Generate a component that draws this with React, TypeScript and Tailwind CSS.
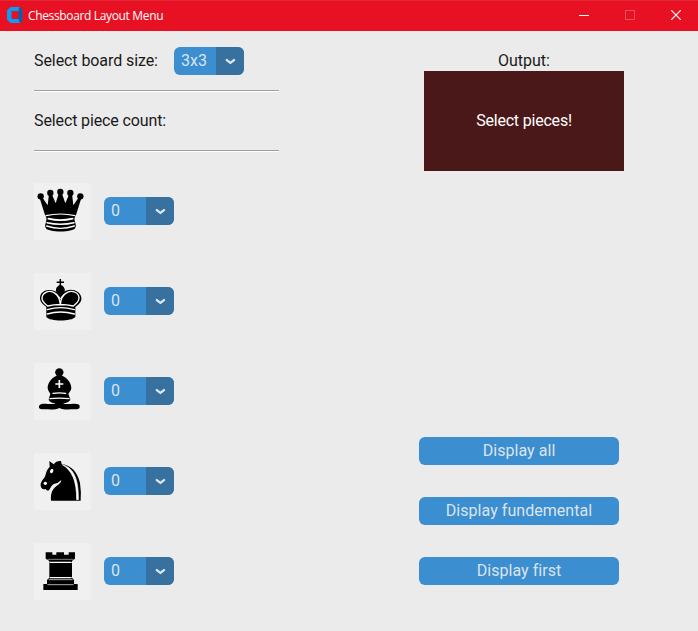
import type { ReactNode } from "react";

function Chevron() {
  return (
    <svg className="h-[28px] w-[28px]" viewBox="0 0 28 28" fill="none">
      <path d="M10.8 13.1 L14.4 15.9 L18 13.1" stroke="#dce4ee" strokeWidth="2.4" strokeLinecap="round" strokeLinejoin="round" />
    </svg>
  );
}

function Select({ value }: { value: string }) {
  return (
    <button className="flex h-[28px] w-[70px] overflow-hidden rounded-[6px] bg-[#3b8ed0] text-[#dce4ee]">
      <span className="w-[42px] pl-[7px] text-left leading-[28px]">{value}</span>
      <span className="h-[28px] w-[28px] bg-[#36719f]">
        <Chevron />
      </span>
    </button>
  );
}

function Separator() {
  return <div className="h-[2px] w-[245px] border-t border-[#a0a0a0] bg-white" />;
}

function Queen() {
  return (
    <>
      <g fill="#000">
        <circle cx="38" cy="55" r="9.5" />
        <circle cx="67" cy="45" r="9.5" />
        <circle cx="97" cy="42" r="9.5" />
        <circle cx="127" cy="45" r="9.5" />
        <circle cx="157" cy="55" r="9.5" />
        <path d="M34 57 L42 57 L59 82 L63 47 L71 47 L83 76 L93 44 L101 44 L112 76 L124 47 L132 47 L136 82 L153 57 L161 57 L144 111 C138 120 139 124 141 132 C143 139 145 143 142 149 C136 164 59 164 53 149 C50 143 52 139 54 132 C56 124 57 120 51 111 Z" />
      </g>
      <g fill="none" stroke="#fff" strokeLinecap="round">
        <path d="M54 113 Q97 103 141 113" strokeWidth="3.5" />
        <path d="M61 122 Q97 131 134 122" strokeWidth="5" />
        <path d="M57 134 Q97 143 138 134" strokeWidth="4.5" />
        <path d="M56 144 Q97 158 139 144" strokeWidth="4" />
      </g>
    </>
  );
}

function King() {
  return (
    <>
      <path d="M97 33 V62 M86 43 H108" stroke="#000" strokeWidth="4.5" />
      <path d="M97 50 C106 53 113 62 110 71 C118 64 137 62 151 73 C163 84 163 98 153 108 L142 117 V147 C131 161 65 161 55 147 V117 C45 110 36 102 36 91 C36 74 50 65 65 66 C74 66 82 69 85 72 C81 62 88 53 97 50 Z" fill="#000" />
      <g fill="none" stroke="#fff" strokeWidth="4" strokeLinecap="round" strokeLinejoin="round">
        <path d="M97 111 C96 94 88 79 77 73 C61 66 43 74 42 90 C41 101 50 106 59 114 Q97 105 136 114 C145 106 154 101 153 89 C152 74 134 66 118 73 C106 79 98 94 97 111" />
        <path d="M84 77 Q92 82 97 93 Q102 82 111 77" strokeWidth="3" />
        <path d="M58 125 Q97 113 139 125" />
        <path d="M58 138 Q97 126 139 138" />
      </g>
    </>
  );
}

function Bishop() {
  return (
    <>
      <g fill="#000">
        <circle cx="94" cy="43" r="12.5" />
        <path d="M94 51 C111 53 131 72 130 91 C129 99 123 103 121 108 L127 124 C125 132 116 135 105 137 Q112 139 128 138 C142 136 155 137 155 144 C156 155 147 154 138 154 C123 154 106 156 94 150 C83 156 65 154 50 154 C41 154 32 155 33 145 C35 137 47 137 59 138 Q76 139 83 137 C72 135 63 132 62 124 L67 108 C65 103 60 99 59 91 C58 72 77 53 94 51 Z" />
      </g>
      <path d="M94 66 V90 M82 78 H106" stroke="#fff" strokeWidth="5" />
      <path d="M75 106 Q94 103 113 106 M66 122 Q94 119 123 122" fill="none" stroke="#fff" strokeWidth="4" strokeLinecap="round" />
    </>
  );
}

function Knight() {
  return (
    <>
      <path d="M64 39 L77 49 Q84 38 99 39 L101 48 C129 51 149 73 156 105 Q160 130 158 158 H69 C67 132 75 120 91 110 Q101 103 100 96 Q91 106 77 108 Q70 112 64 125 Q58 131 53 123 Q45 126 40 119 C34 108 42 98 50 88 C55 78 54 66 65 57 Z" fill="#000" />
      <path d="M103 50 C139 60 152 97 151 155 H146 C146 97 132 67 103 50 Z" fill="#fff" stroke="#fff" strokeWidth="2" />
      <ellipse cx="71" cy="69" rx="4.5" ry="7" fill="#fff" transform="rotate(25 71 69)" />
      <circle cx="52" cy="106" r="5" fill="#fff" />
    </>
  );
}

function Rook() {
  return (
    <>
      <path d="M53 43 H73 V50 H85 V43 H108 V50 H122 V43 H141 V62 L132 69 V119 L138 126 V138 H149 V156 H46 V138 H57 V126 L64 119 V69 L53 62 Z" fill="#000" />
      <path d="M58 64 H137" stroke="#bbb" strokeWidth="2" />
      <path d="M65 73 H131 M65 119 H131" stroke="#fff" strokeWidth="3.5" />
      <path d="M62 125 H134 M58 140 H137" stroke="#aaa" strokeWidth="3" />
    </>
  );
}

const pieces: { name: string; art: ReactNode }[] = [
  { name: "queen", art: <Queen /> },
  { name: "king", art: <King /> },
  { name: "bishop", art: <Bishop /> },
  { name: "knight", art: <Knight /> },
  { name: "rook", art: <Rook /> },
];

function TitleBar() {
  return (
    <header className="flex h-[31px] items-center border-t border-[#e22837] bg-[#e81123] text-white">
      <svg className="mb-[2px] ml-[7px] h-[16px] w-[16px]" viewBox="0 0 16 16">
        <path d="M3.5 0 H13 V4 H4.5 V12 H13 V16 H3.5 L0 12.5 V3.5 Z" fill="#0b9cf4" />
        <path d="M12 1 L13 0 L15.5 3 V13 L13 16 L11.5 12 V4 Z" fill="#075fae" />
      </svg>
      <h1 className="ml-[5px] font-['Open_Sans','Noto_Sans',sans-serif] text-[12px] leading-[30px] tracking-[-0.35px]">
        Chessboard Layout Menu
      </h1>
      <div className="ml-auto flex h-full items-center">
        <span className="flex w-[46px] justify-center">
          <svg className="mb-[2px] h-[10px] w-[10px]" viewBox="0 0 10 10"><path d="M0 5.5 H10" stroke="#fff" /></svg>
        </span>
        <span className="flex w-[46px] justify-center">
          <svg className="mb-[2px] h-[10px] w-[10px]" viewBox="0 0 10 10" fill="none"><rect x="0.5" y="0.5" width="9" height="9" stroke="#f04e5b" /></svg>
        </span>
        <span className="flex w-[45px] justify-center">
          <svg className="mb-[2px] h-[10px] w-[10px]" viewBox="0 0 10 10"><path d="M0.2 0.2 L9.8 9.8 M9.8 0.2 L0.2 9.8" stroke="#fff" strokeWidth="1.2" /></svg>
        </span>
      </div>
    </header>
  );
}

export default function App() {
  return (
    <div className="h-[631px] w-[698px] overflow-hidden bg-[#ebebeb] font-[Roboto,sans-serif] text-[16px] text-[#1a1a1a]">
      <TitleBar />
      <main className="flex">
        <section className="w-[419px] pt-[16px] pl-[34px]">
          <div className="flex h-[28px]">
            <span className="w-[140px] leading-[28px] tracking-[-0.08px]">Select board size:</span>
            <Select value="3x3" />
          </div>
          <div className="pt-[15px]"><Separator /></div>
          <p className="mt-[15px] h-[28px] leading-[28px] tracking-[-0.12px]">Select piece count:</p>
          <div className="pt-[15px]"><Separator /></div>
          <ul className="mt-[31px] flex flex-col gap-[33px]">
            {pieces.map((piece) => (
              <li key={piece.name} className="flex h-[57px] gap-[13px]">
                <svg className="h-[57px] w-[57px] bg-[#f0f0f0]" viewBox="18 15 171 171">{piece.art}</svg>
                <div className="pt-[14px]"><Select value="0" /></div>
              </li>
            ))}
          </ul>
        </section>
        <section className="pt-[16px]">
          <div className="ml-[5px] w-[200px] text-center">
            <p className="h-[24px] leading-[28px]">Output:</p>
            <div className="h-[100px] bg-[#4a1818] leading-[100px] tracking-[-0.2px] text-white">Select pieces!</div>
          </div>
          <div className="mt-[266px] flex w-[200px] flex-col gap-[32px]">
            {["Display all", "Display fundemental", "Display first"].map((label) => (
              <button key={label} className="h-[28px] rounded-[6px] bg-[#3b8ed0] leading-[28px] tracking-[0.05px] text-[#dce4ee]">{label}</button>
            ))}
          </div>
        </section>
      </main>
    </div>
  );
}
